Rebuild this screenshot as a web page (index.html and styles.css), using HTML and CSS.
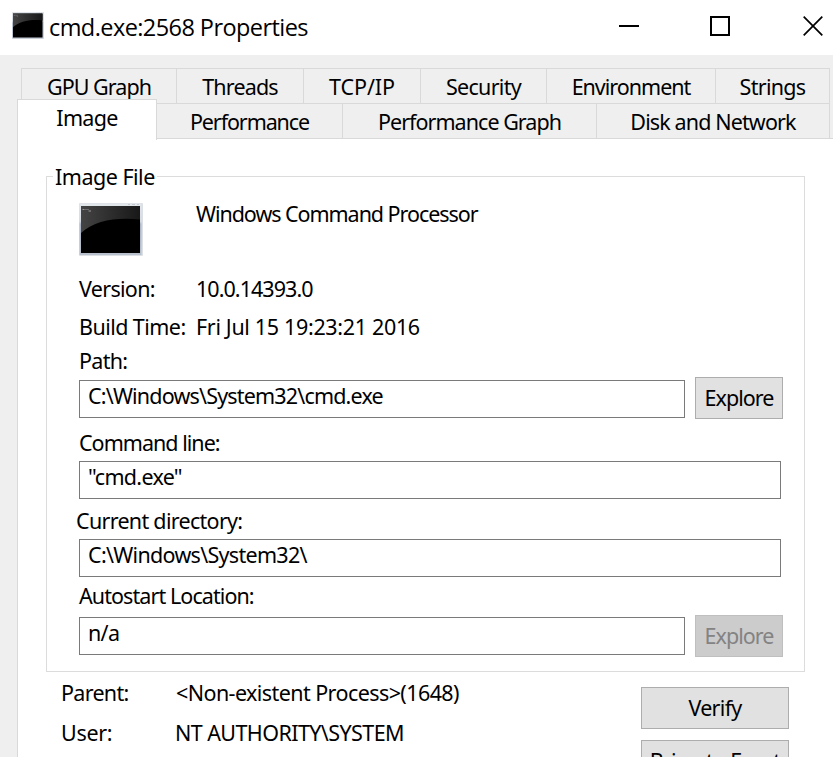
FILE: index.html
```html
<!DOCTYPE html>
<html lang="en">
<head>
<meta charset="utf-8">
<title>cmd.exe:2568 Properties</title>
<link rel="stylesheet" href="styles.css">
</head>
<body>
<header class="titlebar">
  <svg class="app-icon" viewBox="0 0 64 53" preserveAspectRatio="none"><use href="#console"/></svg>
  <h1 class="title">cmd.exe:2568 Properties</h1>
  <div class="window-controls">
    <svg width="20" height="20" viewBox="0 0 20 20"><path d="M0 10h20" stroke="#000" stroke-width="2"/></svg>
    <svg width="20" height="20" viewBox="0 0 20 20"><rect x="1" y="1" width="18" height="18" fill="none" stroke="#000" stroke-width="2"/></svg>
    <svg width="20" height="20" viewBox="0 0 20 20"><path d="M.7.7 19.3 19.3M19.3.7.7 19.3" stroke="#000" stroke-width="1.7"/></svg>
  </div>
</header>
<nav class="tabs">
  <div class="tab-row back">
    <span class="tab gpu">GPU Graph</span><span class="tab threads">Threads</span><span class="tab tcp">TCP/IP</span><span class="tab security">Security</span><span class="tab environment">Environment</span><span class="tab strings">Strings</span>
  </div>
  <div class="tab-row front">
    <span class="tab active">Image</span><span class="tab performance">Performance</span><span class="tab perf-graph">Performance Graph</span><span class="tab disk">Disk and Network</span>
  </div>
</nav>
<main class="panel">
  <section class="group">
    <h2 class="legend"><span>Image File</span></h2>
    <div class="identity">
      <svg class="file-icon" viewBox="0 0 64 53">
        <defs>
          <linearGradient id="frame" x2="0" y2="1"><stop offset="0" stop-color="#e2e7ec"/><stop offset=".35" stop-color="#d5dae2"/><stop offset=".4" stop-color="#aeb8c9"/><stop offset="1" stop-color="#b8c0cc"/></linearGradient>
          <linearGradient id="gloss"><stop offset="0" stop-color="#444"/><stop offset=".45" stop-color="#303030"/><stop offset="1" stop-color="#181818"/></linearGradient>
          <g id="console">
            <rect width="64" height="53" rx="1" fill="#dcdfe3"/>
            <rect x=".5" y=".5" width="62" height="51.5" fill="url(#frame)"/>
            <path d="M49 1.500h2M53 1.500h3M58 1.500h2" stroke="#c4c9d0"/>
            <rect x="2" y="3" width="59" height="47" fill="#000"/>
            <path d="M2 3h59v13.500C38 14 16 17 2 30z" fill="url(#gloss)"/>
            <path d="M3.500 6.500h2M6.500 6.500h1M8.500 6.500h1M9.500 8h2.500" stroke="#999" stroke-width="1.200"/>
          </g>
        </defs>
        <use href="#console"/>
      </svg>
      <span class="description">Windows Command Processor</span>
    </div>
    <div class="info version"><span class="key">Version:</span><span class="value">10.0.14393.0</span></div>
    <div class="info build"><span class="key">Build Time:</span><span class="value">Fri Jul 15 19:23:21 2016</span></div>
    <div class="label path-label">Path:</div>
    <div class="field-row path-row"><div class="field path">C:\Windows\System32\cmd.exe</div><button class="explore">Explore</button></div>
    <div class="label command-label">Command line:</div>
    <div class="field command">"cmd.exe"</div>
    <div class="label directory-label">Current directory:</div>
    <div class="field directory">C:\Windows\System32\</div>
    <div class="label autostart-label">Autostart Location:</div>
    <div class="field-row autostart-row"><div class="field autostart">n/a</div><button class="explore" disabled>Explore</button></div>
  </section>
  <section class="process">
    <div class="details">
      <div class="detail parent"><span class="key">Parent:</span><span class="value">&lt;Non-existent Process&gt;(1648)</span></div>
      <div class="detail user"><span class="key">User:</span><span class="value">NT AUTHORITY\SYSTEM</span></div>
    </div>
    <div class="actions"><button>Verify</button><button>Bring to Front</button></div>
  </section>
</main>
</body>
</html>
```
FILE: styles.css
```css
* { box-sizing: border-box; }
body {
  margin: 0;
  width: 833px;
  height: 757px;
  overflow: hidden;
  background: #efefef;
  color: #000;
  font: 21.5px/28px "Noto Sans", sans-serif;
  letter-spacing: -.7px;
  white-space: nowrap;
}
h1, h2 { margin: 0; font-size: inherit; font-weight: 400; }
svg { display: block; flex: none; }
.titlebar { display: flex; height: 55px; background: #fff; padding: 12px 10px 0 12px; }
.app-icon { width: 32px; height: 27px; }
.title { font: 23.5px/32px "Open Sans", sans-serif; letter-spacing: -.57px; margin: -1px 0 0 5px; }
.window-controls { display: flex; margin: 4px 0 0 auto; gap: 71px; }
.window-controls svg:last-child { margin-left: 2px; }
.tabs { height: 84px; padding-top: 13px; }
.tab-row { display: flex; }
.back { margin-left: 21px; height: 35px; }
.tab { border: 1px solid #d9d9d9; border-width: 1px 1px 0 0; padding-top: 4px; text-align: center; }
.back .tab:first-child { border-left-width: 1px; }
.gpu { width: 156px; letter-spacing: -.95px; }
.threads { width: 127px; letter-spacing: -.85px; }
.tcp { width: 117px; letter-spacing: -.1px; }
.security { width: 126px; }
.environment { width: 169px; letter-spacing: -1px; }
.strings { width: 114px; }
.front { height: 36px; margin-left: 17px; }
.front .tab:not(.active) { border-bottom-width: 1px; }
.front .active { width: 140px; height: 41px; margin-top: -4px; border-left-width: 1px; background: #fff; z-index: 1; }
.performance { width: 186px; letter-spacing: -1.1px; }
.perf-graph { width: 254px; letter-spacing: -.97px; }
.disk { width: 233px; letter-spacing: -.87px; }
.front::after { content: ""; flex: 1; border-bottom: 1px solid #d9d9d9; }
.panel { height: 618px; margin-left: 17px; border-left: 1px solid #d9d9d9; background: #fff; padding: 37px 0 0 28px; }
.group { width: 759px; height: 496px; border: 1px solid #dcdcdc; padding-left: 32px; }
.legend { height: 28px; margin: -14px 0 0 -26px; letter-spacing: -.5px; }
.legend span { background: #fff; padding: 0 2px; }
.identity { display: flex; height: 53px; margin-top: 12px; }
.file-icon { width: 64px; height: 53px; }
.description { margin-left: 53px; margin-top: -3px; letter-spacing: -1.05px; }
.info { display: flex; }
.info .key { width: 117px; }
.version { margin-top: 19px; }
.version .value { letter-spacing: -.95px; }
.build { margin-top: 10px; }
.build .key { letter-spacing: -.55px; }
.build .value { letter-spacing: -.33px; }
.path-label { margin-top: 6px; }
.field { width: 702px; height: 38px; border: 1px solid #7a7a7a; padding: 1px 8px; background: #fff; }
.field-row { display: flex; align-items: flex-start; gap: 10px; }
.field-row .field { width: 606px; }
.path-row { margin-top: 2px; height: 42px; }
.path { margin-top: 3px; letter-spacing: -.82px; }
button { font: inherit; letter-spacing: inherit; color: #000; background: #e1e1e1; border: 1px solid #adadad; padding: 0; height: 42px; }
.explore { width: 88px; letter-spacing: -.95px; }
button:disabled { color: #838383; background: #ccc; border-color: #bfbfbf; }
.command-label { margin-top: 10px; letter-spacing: -.97px; }
.command { margin-top: 4px; }
.directory-label { margin: 8px 0 0 -3px; }
.directory { margin-top: 4px; }
.autostart-label { margin-top: 5px; letter-spacing: -.92px; }
.autostart-row { margin-top: 5px; }
.autostart { margin-top: 2px; }
.process { display: flex; margin-left: 15px; }
.details { width: 580px; padding-top: 7px; }
.detail { display: flex; height: 40px; }
.detail .key { width: 115px; }
.detail .value { letter-spacing: -.58px; }
.user .key { width: 114px; letter-spacing: -.3px; }
.actions { display: flex; flex-direction: column; gap: 11px; padding-top: 15px; }
.actions button { width: 148px; flex: none; }
```
